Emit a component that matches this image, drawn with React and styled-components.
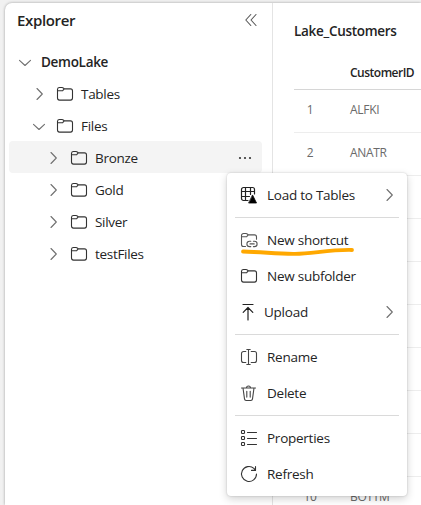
import React from "react";
import styled, { createGlobalStyle } from "styled-components";

const Global = createGlobalStyle`
  * { box-sizing: border-box; }
  body { margin: 0; background: #f1f1f1; overflow: hidden; }
`;

const Page = styled.div`
  position: relative;
  width: 421px;
  height: 505px;
  overflow: hidden;
  padding: 3px 0 0 5px;
  font-family: "Open Sans", "Noto Sans", sans-serif;
  font-size: 13.5px;
  color: #242424;
`;

const Shell = styled.div`
  display: flex;
  height: 502px;
  background: #fff;
  border-top-left-radius: 7px;
  box-shadow: 0 0 3px rgba(0, 0, 0, 0.35);
`;

const Explorer = styled.aside`
  width: 268px;
  flex: none;
  border-right: 1px solid #e4e4e4;
`;

const ExplorerHeader = styled.header`
  display: flex;
  align-items: center;
  justify-content: space-between;
  height: 42px;
  padding: 0 15px 8px 12px;
`;

const Label = styled.span`
  font-size: ${(p) => p.$size || 13.5}px;
  font-weight: ${(p) => p.$weight || 400};
  letter-spacing: ${(p) => p.$track ?? -0.3}px;
  line-height: 20px;
  white-space: nowrap;
`;

const TreeRow = styled.div`
  display: flex;
  align-items: center;
  height: 32px;
  margin: 0 10px 0 4px;
  padding: 2px 9px 0 ${(p) => 9 + p.$level * 14}px;
  border-radius: 4px;
  background: ${(p) => (p.$active ? "#f4f4f4" : "transparent")};
`;

const ChevronSlot = styled.span`
  display: flex;
  width: 14px;
  margin-right: ${(p) => p.$gap}px;
`;

const FolderSlot = styled.span`
  display: flex;
  width: 18px;
  margin-right: 7px;
`;

const More = styled.span`
  display: flex;
  margin-left: auto;
`;

const Preview = styled.main`
  flex: 1;
  min-width: 0;
  padding: 18px 0 0 21px;
`;

const Title = styled.div`
  height: 29px;
  line-height: 20px;
`;

const GridRow = styled.div`
  display: grid;
  grid-template-columns: 32px 1fr;
  column-gap: 24px;
  align-items: center;
  height: ${(p) => (p.$head ? 40 : 43)}px;
  padding: ${(p) => (p.$head ? "6px 0 0" : "0 0 2px")};
  border-bottom: 1px solid ${(p) => (p.$head ? "#d6d6d6" : "#ededed")};
  color: ${(p) => (p.$head ? "#242424" : "#6a6a6a")};
`;

const Index = styled.span`
  text-align: center;
  font-size: 12px;
  line-height: 20px;
  letter-spacing: -0.3px;
`;

const Menu = styled.div`
  position: absolute;
  left: 227px;
  top: 173px;
  width: 180px;
  height: 323px;
  padding: 4px 8px;
  background: #fff;
  border-radius: 4px;
  box-shadow: 0 0 2px rgba(0, 0, 0, 0.2), 0 3px 8px rgba(0, 0, 0, 0.18);
`;

const MenuItem = styled.div`
  display: flex;
  align-items: center;
  height: 36px;
  padding: 0 3px 0 5px;
`;

const IconSlot = styled.span`
  display: flex;
  width: 20px;
  margin-right: ${(p) => p.$gap}px;
`;

const Separator = styled.div`
  height: 1px;
  margin: 4px 0;
  background: #dadada;
`;

const Marker = styled.svg`
  position: absolute;
  left: 12px;
  top: 70px;
`;

const Icon = ({ w = 18, h = 18, stroke = "#333", sw = 1.1, children }) => (
  <svg
    width={w}
    height={h}
    viewBox={`0 0 ${w} ${h}`}
    fill="none"
    stroke={stroke}
    strokeWidth={sw}
    strokeLinecap="round"
    strokeLinejoin="round"
  >
    {children}
  </svg>
);

const ChevronRight = () => (
  <Icon w={14} h={14} stroke="#707070">
    <path d="M5 1.5 10.3 7 5 12.5" />
  </Icon>
);
const ChevronDown = () => (
  <Icon w={14} h={14} stroke="#707070">
    <path d="M1.5 5.3 7 10.5 12.5 5.3" />
  </Icon>
);
const Folder = () => (
  <Icon>
    <path d="M1.5 4.3A2 2 0 0 1 3.5 2.5h2.6q.7 0 1.2.5l1 .9h6.2a2 2 0 0 1 2 2v7.2a2 2 0 0 1-2 2h-11a2 2 0 0 1-2-2zM1.5 5.8H6q.7 0 1.1-.6l1.2-1.3" />
  </Icon>
);
const FolderLink = () => (
  <Icon stroke="#555">
    <path d="M5.5 15.5h-2a2 2 0 0 1-2-2v-9a2 2 0 0 1 2-2h2.6q.7 0 1.2.5l1 .9h6.2a2 2 0 0 1 2 2v2.3M1.5 5.8H6q.7 0 1.1-.6l1.2-1.3" />
    <path d="M10.8 10.2H9.6a2.7 2.7 0 0 0 0 5.4h1.2M13.4 10.2h1a2.7 2.7 0 0 1 0 5.4h-1M10 12.9h4.2" />
  </Icon>
);
const TableLoad = () => (
  <Icon stroke="#222" sw={1.2}>
    <path d="M8 14.5H3.5a2 2 0 0 1-2-2v-9a2 2 0 0 1 2-2h9a2 2 0 0 1 2 2V8M5.5 1.5v13M10.5 1.5v7M1.5 5.5h13M1.5 10.5h8" />
    <path d="M12.7 9.3 16.5 17H9z" fill="#000" stroke="#000" strokeWidth=".8" />
  </Icon>
);
const UploadIcon = () => (
  <Icon stroke="#222" sw={1.2}>
    <path d="M3 1.5h10M8 17V4.7M3.2 9.3 8 4.5l4.8 4.8" />
  </Icon>
);
const RenameIcon = () => (
  <Icon stroke="#444">
    <path d="M5.8 14.5H3.5a2 2 0 0 1-2-2v-7a2 2 0 0 1 2-2h2.3M11.2 3.5h3.3a2 2 0 0 1 2 2v7a2 2 0 0 1-2 2h-3.3M8.5 1.5v15M6.8 1.5h3.4M6.8 16.5h3.4" />
  </Icon>
);
const TrashIcon = () => (
  <Icon stroke="#444">
    <path d="M1.5 4h14M3 4l1.5 10.9q.2 1.6 1.6 1.6h4.8q1.4 0 1.6-1.6L14 4M6.5 4a2 2 0 0 1 4 0M6.8 7.3v5.8M10.2 7.3v5.8" />
  </Icon>
);
const PropertiesIcon = () => (
  <Icon>
    <path d="M7.5 3.5h9M7.5 9.5h9M7.5 15.5h9" />
    {[1.5, 7.5, 13.5].map((y) => (
      <rect key={y} x="1.5" y={y} width="3" height="3" rx=".8" />
    ))}
  </Icon>
);
const RefreshIcon = () => (
  <Icon>
    <path d="M16.5 9a7.5 7.5 0 1 1-2.6-5.7L15.2 5M15.5 1.5V5.4h-4" />
  </Icon>
);

const TREE = [
  { text: "DemoLake", level: 0, open: true, root: true },
  { text: "Tables", level: 1 },
  { text: "Files", level: 1, open: true },
  { text: "Bronze", level: 2, active: true },
  { text: "Gold", level: 2 },
  { text: "Silver", level: 2 },
  { text: "testFiles", level: 2 },
];

const MENU = [
  { text: "Load to Tables", icon: TableLoad, more: true },
  null,
  { text: "New shortcut", icon: FolderLink },
  { text: "New subfolder", icon: Folder },
  { text: "Upload", icon: UploadIcon, more: true, gap: 4 },
  null,
  { text: "Rename", icon: RenameIcon },
  { text: "Delete", icon: TrashIcon },
  null,
  { text: "Properties", icon: PropertiesIcon },
  { text: "Refresh", icon: RefreshIcon },
];

const CUSTOMERS = ["ALFKI", "ANATR", "", "", "", "", "", "", "", "BOTTM"];

export default function App() {
  return (
    <Page>
      <Global />
      <Shell>
        <Explorer>
          <ExplorerHeader>
            <Label $size={15} $weight={600} $track={-0.35}>Explorer</Label>
            <Icon w={12} h={14} stroke="#555">
              <path d="M5.8 1.5.8 7l5 5.5M11 1.5 6 7l5 5.5" />
            </Icon>
          </ExplorerHeader>
          {TREE.map((n) => (
            <TreeRow key={n.text} $level={n.level} $active={n.active}>
              <ChevronSlot $gap={n.root ? 9 : 10}>
                {n.open ? <ChevronDown /> : <ChevronRight />}
              </ChevronSlot>
              {!n.root && <FolderSlot><Folder /></FolderSlot>}
              <Label $weight={n.root ? 600 : 400}>{n.text}</Label>
              {n.active && (
                <More>
                  <svg width="16" height="4" fill="#333">
                    <circle cx="3" cy="2" r="1.1" />
                    <circle cx="8" cy="2" r="1.1" />
                    <circle cx="13" cy="2" r="1.1" />
                  </svg>
                </More>
              )}
            </TreeRow>
          ))}
        </Explorer>
        <Preview>
          <Title><Label $weight={600} $size={13.5}>Lake_Customers</Label></Title>
          <GridRow $head>
            <span />
            <Label $size={12} $weight={600} $track={-0.5}>CustomerID</Label>
          </GridRow>
          {CUSTOMERS.map((c, i) => (
            <GridRow key={i}>
              {c && <Index>{i + 1}</Index>}
              {c && <Label $size={12}>{c}</Label>}
            </GridRow>
          ))}
        </Preview>
      </Shell>
      <Menu>
        {MENU.map((m, i) =>
          m ? (
            <MenuItem key={m.text}>
              <IconSlot $gap={m.gap ?? 7}><m.icon /></IconSlot>
              <Label $track={-0.25}>{m.text}</Label>
              {m.more && <More><ChevronRight /></More>}
            </MenuItem>
          ) : (
            <Separator key={i} />
          )
        )}
        <Marker width="120" height="18" fill="none" stroke="#ffa800" strokeWidth="3.8" strokeLinecap="round" strokeLinejoin="round">
          <path d="M4 8.5 C25 9,38 11,56 10.8 S90 6.5,113 7" />
        </Marker>
      </Menu>
    </Page>
  );
}
